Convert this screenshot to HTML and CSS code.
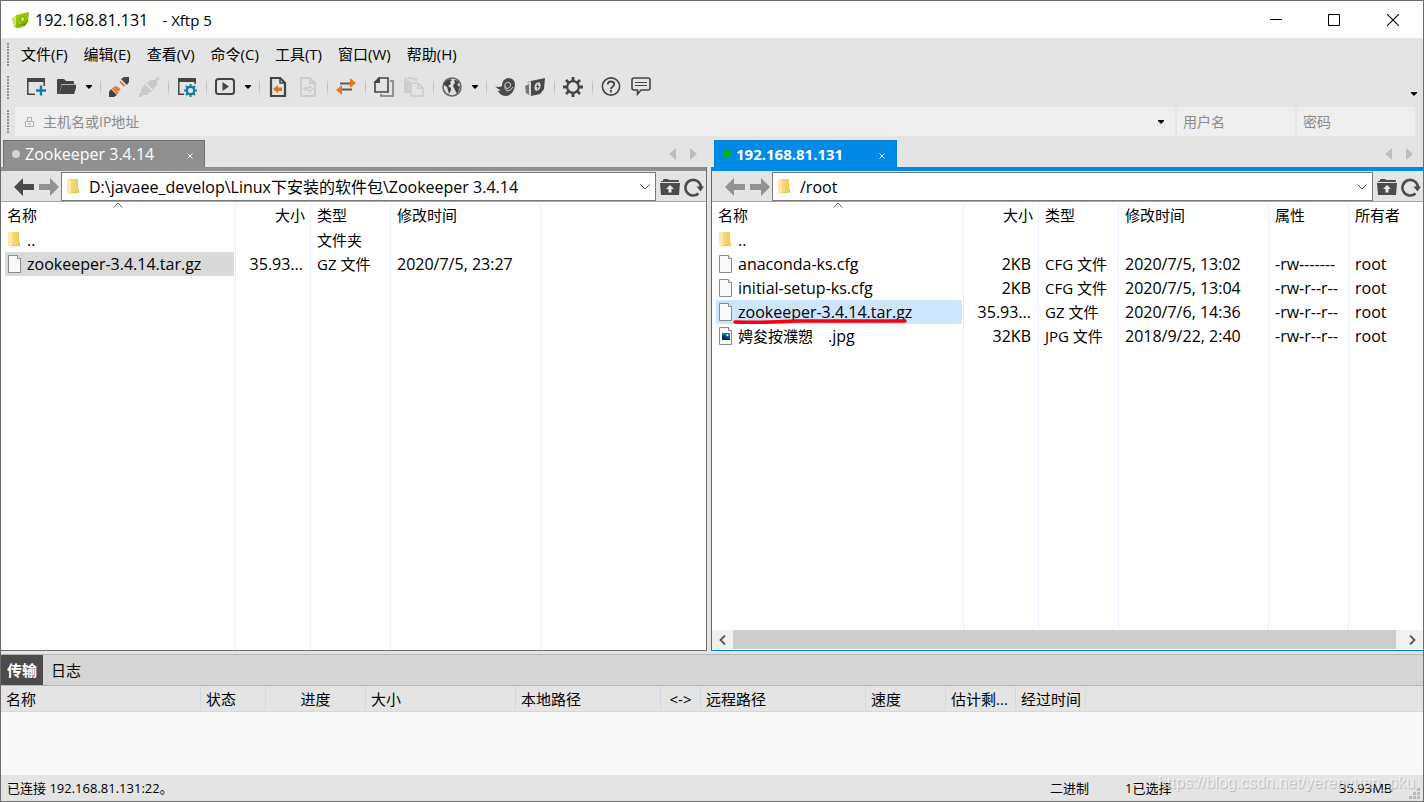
FILE: index.html
```html
<!DOCTYPE html>
<html lang="zh-CN">
<head>
<meta charset="utf-8">
<title>192.168.81.131 - Xftp 5</title>
<link rel="stylesheet" href="styles.css">
</head>
<body>
<svg class="defs" aria-hidden="true">
  <defs>
    <linearGradient id="gold" x1="0" x2="1"><stop offset="0" stop-color="#fbdf8d"/><stop offset="1" stop-color="#f2c85b"/></linearGradient>
    <linearGradient id="lime" x1="0" y1="0" x2="1" y2="1"><stop offset="0" stop-color="#b5d800"/><stop offset="1" stop-color="#5f9000"/></linearGradient>
  </defs>
  <symbol id="folder" viewBox="0 0 14 18"><path d="M3 1h9v13H3z" fill="url(#gold)"/><path d="M1 1h2l2 2v14l-4-2z" fill="#ffe9a8"/><path d="M12 11h1v4H5v-1h7z" fill="#eec45a"/></symbol>
  <symbol id="file" viewBox="0 0 16 20"><path d="M1.500 1.500h9l3 3v14h-12z" fill="#f7f9fa" stroke="#8a8a8a"/><path d="M10.500 1.500v3h3" fill="#fff" stroke="#8a8a8a"/></symbol>
  <symbol id="image" viewBox="0 0 16 20"><path d="M1.500 1.500h9l3 3v14h-12z" fill="#fff" stroke="#8a8a8a"/><path d="M10.500 1.500v3h3" fill="#fff" stroke="#8a8a8a"/><path d="M4 7h8v7H4z" fill="#1767c0"/><path d="M4 14v-3l2-2 3 3 1-1 2 2v1z" fill="#0a2d5f"/><circle cx="9.500" cy="9" r="1" fill="#fff"/></symbol>
  <symbol id="back" viewBox="0 0 20 18"><path d="M0 9 9 0v6h11v6H9v6z" fill="currentColor"/></symbol>
  <symbol id="forward" viewBox="0 0 20 18"><path d="M20 9 11 0v6H0v6h11v6z" fill="currentColor"/></symbol>
  <symbol id="up" viewBox="0 0 20 18"><path d="M1 4V3h2V2q0-1 1-1h4l1 1h9q1 0 1 1v1z" fill="#4b4b4b"/><path d="M0 5h20l-1 12H1z" fill="#4b4b4b"/><path d="M10 7l4 4h-2.500v3.500h-3V11H6z" fill="#e8e8e8"/></symbol>
  <symbol id="refresh" viewBox="0 0 20 20"><path d="M14.500 16.500A7.800 7.800 0 1 1 17 10" fill="none" stroke="#4b4b4b" stroke-width="2.600"/><path d="M12.500 9.500h7.500l-3.500 5z" fill="#4b4b4b"/></symbol>
  <symbol id="chevron" viewBox="0 0 10 6"><path d="M.5.500 5 5 9.500.500" fill="none" stroke="#444"/></symbol>
  <symbol id="sort" viewBox="0 0 10 6"><path d="M.5 5.500 5 1l4.500 4.500" fill="none" stroke="#666"/></symbol>
  <symbol id="caret" viewBox="0 0 8 4"><path d="M1 0h6v1L4 4 1 1z" fill="#000"/></symbol>
  <symbol id="prev" viewBox="0 0 7 12"><path d="M7 0v12L0 6z" fill="#bdbdbd"/></symbol>
  <symbol id="next" viewBox="0 0 7 12"><path d="M0 0v12l7-6z" fill="#bdbdbd"/></symbol>
  <symbol id="cross" viewBox="0 0 6 6"><path d="m.5.500 5 5m0-5-5 5" stroke="#fff" fill="none"/></symbol>
</svg>

<div class="window">
  <header class="titlebar">
    <svg class="logo" viewBox="0 0 19 18" aria-hidden="true"><path d="m1 7 3-1 1 8 9 2-8 1.500-3-2z" fill="#a9cc3a"/><path d="m2 6 4-2 1 11-4-1z" fill="#cbe67c"/><path d="m5 4 13-3-1 10-3 4-9 1z" fill="url(#lime)"/><path d="m6 5 11-3-1 8-9 4z" fill="#9ac60a"/><ellipse cx="11.500" cy="8" rx="2.200" ry="2.600" fill="#c9e45f" stroke="#7ba300"/></svg>
    <h1>192.168.81.131 <span>- Xftp 5</span></h1>
    <div class="winbuttons">
      <button aria-label="最小化"><svg width="12" height="12" viewBox="0 0 12 12"><path d="M0 5.500h12" stroke="#000"/></svg></button>
      <button aria-label="最大化"><svg width="12" height="12" viewBox="0 0 12 12"><path d="M.5.500h11v11H.5z" fill="none" stroke="#000"/></svg></button>
      <button aria-label="关闭"><svg width="12" height="12" viewBox="0 0 12 12"><path d="m0 0 12 12M12 0 0 12" stroke="#000" stroke-width="1.100"/></svg></button>
    </div>
  </header>

  <nav class="menubar gripped">
    <button>文件(F)</button><button>编辑(E)</button><button>查看(V)</button><button>命令(C)</button><button>工具(T)</button><button>窗口(W)</button><button>帮助(H)</button>
  </nav>

  <div class="toolbar gripped" role="toolbar">
    <button aria-label="新建"><svg viewBox="0 0 20 20"><path d="M1 1h18v4H1z" fill="#444"/><path d="M1.800 4v13.200H9M18.200 4v5" fill="none" stroke="#444" stroke-width="1.500"/><path d="M15 8.500v10M10 13.500h10" stroke="#1579a6" stroke-width="2.400"/></svg></button>
    <button aria-label="打开"><svg viewBox="0 0 20 20"><path d="M1 17V3q0-1 1-1h6l2 2h7q1 0 1 1v2H6L3 17z" fill="#444"/><path d="M6 8h15l-3 9H3z" fill="#444"/><path d="M5.500 7.500H20" stroke="#b5b5b5"/></svg></button>
    <button class="drop" aria-label="打开列表"><svg viewBox="0 0 8 4"><use href="#caret"/></svg></button>
    <i class="sep"></i>
    <button aria-label="连接"><svg viewBox="0 0 20 20"><path d="M0 20v-5l2-3 6 6-3 2zM20 0v5l-2 3-6-6 3-2z" fill="#444"/><path d="M3.500 11 9 16.500M5.500 9.500l4.500 4.500M11 4.500 15.500 9M6.500 12.500l2.500-2.500M8.500 14l2.500-2.500" stroke="#e27b1e" stroke-width="1.800"/></svg></button>
    <button disabled aria-label="断开"><svg viewBox="0 0 20 20"><path d="M0 20v-3l2-1v-4l4-4 6 6-4 4H4l-1 2zM8 6l6 6 4-4V4l2-1V0l-3 1-1 2h-4z" fill="#cacaca"/><path d="m5 7 8 8M7 5l8 8" stroke="#c4c4c4"/></svg></button>
    <i class="sep"></i>
    <button aria-label="属性"><svg viewBox="0 0 20 20"><path d="M1 1h18v4H1z" fill="#444"/><path d="M1.800 4v13.200H7M18.200 4v3" fill="none" stroke="#444" stroke-width="1.500"/><circle cx="13.500" cy="13.500" r="3.700" fill="#e5e5e5" stroke="#1579a6" stroke-width="2.200"/><path d="M13.500 7v3M13.500 17v3M7 13.500h3M17 13.500h3M9 9l2 2M16 16l2 2M9 18l2-2M16 11l2-2" stroke="#1579a6" stroke-width="2"/></svg></button>
    <i class="sep"></i>
    <button aria-label="运行"><svg viewBox="0 0 20 20"><rect x="1" y="2" width="18" height="15" rx="2.500" fill="none" stroke="#444" stroke-width="2"/><path d="m7.500 5 6.500 4.500L7.500 14z" fill="#444"/></svg></button>
    <button class="drop" aria-label="运行列表"><svg viewBox="0 0 8 4"><use href="#caret"/></svg></button>
    <i class="sep"></i>
    <button aria-label="传输"><svg viewBox="0 0 20 20"><path d="M3 1h9l5 5v13H3z" fill="none" stroke="#444" stroke-width="2.200"/><path d="M12 1v5h5" fill="none" stroke="#444" stroke-width="1.500"/><path d="m5 12 5-4v2.500h4v3.500h-4v2.500z" fill="#df761a"/></svg></button>
    <button disabled aria-label="接收"><svg viewBox="0 0 20 20"><path d="M3 1h9l5 5v13H3zM12 1v5h5" fill="none" stroke="#cbcbcb" stroke-width="1.800"/><path d="m15 12-4-3v2H6v2h5v2z" fill="none" stroke="#c2c2c2"/></svg></button>
    <i class="sep"></i>
    <button aria-label="同步"><svg viewBox="0 0 20 20"><path d="M14 1v10l6-5zM6 8v10l-6-5z" fill="#e17b20"/><path d="M4 6.500h10M6 12.500h10" stroke="#5b5b5b" stroke-width="2"/></svg></button>
    <i class="sep"></i>
    <button aria-label="复制"><svg viewBox="0 0 20 20"><path d="M5.500 1H14v14H1V5.500z" fill="none" stroke="#444" stroke-width="1.600"/><path d="M0 6V5l5-5h1v6z" fill="#444"/><path d="M16 4h3v15H7v-2" fill="none" stroke="#777" stroke-width="1.500"/></svg></button>
    <button disabled aria-label="粘贴"><svg viewBox="0 0 20 20"><path d="M0 1h4l1-1h3l1 1h4v3H6v12H0z" fill="#cdcdcd"/><path d="M2 3h9" stroke="#ececec"/><path d="M7 6h7l5 5v8H7zM14 6v5h5" fill="#e4e4e4" stroke="#cbcbcb" stroke-width="1.500"/></svg></button>
    <i class="sep"></i>
    <button aria-label="浏览"><svg viewBox="0 0 20 20"><circle cx="10" cy="10" r="9" fill="#dedede" stroke="#666" stroke-width="1.600"/><path d="M2 6q2-3 6-4l2 1-2 2 1 2-3 2 3 2v2l-2 4-1-4-1-3-3-2zM12 3q4 0 5 3l-2 2 2 1 1 1-1 3-2 4-2-4-2-4 1-2 1-1z" fill="#444"/></svg></button>
    <button class="drop" aria-label="浏览列表"><svg viewBox="0 0 8 4"><use href="#caret"/></svg></button>
    <i class="sep"></i>
    <button aria-label="Xshell"><svg viewBox="0 0 20 20"><path d="M0 9q4 2 7 0 0-7 6-8 7 0 7 7-1 9-8 11-7 0-9-5l3-1q-4-1-6-4z" fill="#4a4a4a"/><path d="M10 9q1 4 4 2 3-2 1-5-3-2-5 1-1 5 2 7 4 0 6-4" fill="none" stroke="#d0d0d0" stroke-width="1"/></svg></button>
    <button aria-label="Xftp"><svg viewBox="0 0 20 20"><path d="m6 4 14-3-1 11-4 5-9 2z" fill="#484848"/><path d="m0 9 4-2v11l-3-2z" fill="#777"/><path d="m2 5 5-2-2 3H2z" fill="#bbb"/><path d="M5 5v14" stroke="#cfcfcf"/><path d="M12.500 5.500q3-1 3 3t-3 5q-3 1-3-3t3-5z" fill="#dcdcdc"/><path d="m13 6.500-2 3.500h1.500l-.5 3 2.500-4H13z" fill="#484848"/></svg></button>
    <i class="sep"></i>
    <button aria-label="选项"><svg viewBox="0 0 20 20"><circle cx="10" cy="10" r="5.800" fill="none" stroke="#444" stroke-width="2.200"/><path d="M10 0v4M10 16v4M0 10h4M16 10h4M3 3l3 3M14 14l3 3M3 17l3-3M14 6l3-3" stroke="#444" stroke-width="2.800"/></svg></button>
    <i class="sep"></i>
    <button aria-label="帮助"><svg viewBox="0 0 20 20"><circle cx="10" cy="9.500" r="8.600" fill="none" stroke="#444" stroke-width="1.600"/><path d="M6.800 7.500q0-3 3.200-3t3.200 2.800q0 1.500-1.600 2.500T10 12M10 13v2.500" fill="none" stroke="#444" stroke-width="1.800"/></svg></button>
    <button aria-label="反馈"><svg viewBox="0 0 20 20"><path d="M3 1h14q2 0 2 2v8q0 2-2 2h-7l-3.500 4v-4H3q-2 0-2-2V3q0-2 2-2z" fill="none" stroke="#444" stroke-width="1.600"/><path d="M4 5.500h12M4 8.500h12" stroke="#444" stroke-width="1.200"/></svg></button>
    <button class="overflow" aria-label="更多"><svg viewBox="0 0 8 4"><use href="#caret"/></svg></button>
  </div>

  <form class="address gripped">
    <div class="host">
      <svg class="lock" viewBox="0 0 9 10" aria-hidden="true"><path d="M.5 4.500h8v5h-8zM2.500 4V.500h4V4M3 7h3" fill="none" stroke="#b0b0b0"/></svg>
      <input aria-label="主机名或IP地址" placeholder="主机名或IP地址">
      <button type="button" class="drop" aria-label="主机列表"><svg viewBox="0 0 8 4"><use href="#caret"/></svg></button>
    </div>
    <input class="cred" aria-label="用户名" placeholder="用户名">
    <input class="cred" type="password" aria-label="密码" placeholder="密码">
  </form>

  <main class="panes">
    <section class="pane local">
      <div class="tabs">
        <div class="tab"><i class="dot"></i><span>Zookeeper 3.4.14</span><button aria-label="关闭标签"><svg viewBox="0 0 6 6"><use href="#cross"/></svg></button></div>
        <div class="scrolltabs"><button aria-label="上一个"><svg viewBox="0 0 7 12"><use href="#prev"/></svg></button><button aria-label="下一个"><svg viewBox="0 0 7 12"><use href="#next"/></svg></button></div>
      </div>
      <div class="frame">
        <div class="pathbar">
          <button class="nav on" aria-label="后退"><svg viewBox="0 0 20 18"><use href="#back"/></svg></button>
          <button class="nav" aria-label="前进"><svg viewBox="0 0 20 18"><use href="#forward"/></svg></button>
          <div class="path"><svg class="folder"><use href="#folder"/></svg><input aria-label="本地路径" value="D:\javaee_develop\Linux下安装的软件包\Zookeeper 3.4.14"><button aria-label="展开"><svg viewBox="0 0 10 6"><use href="#chevron"/></svg></button></div>
          <button class="tool" aria-label="上级文件夹"><svg viewBox="0 0 20 18"><use href="#up"/></svg></button>
          <button class="tool" aria-label="刷新"><svg viewBox="0 0 20 20"><use href="#refresh"/></svg></button>
        </div>
        <div class="list">
          <table>
            <colgroup><col class="c-lname"><col class="c-size"><col class="c-type"><col class="c-date"><col></colgroup>
            <thead><tr><th>名称<svg class="sort" viewBox="0 0 10 6"><use href="#sort"/></svg></th><th class="num">大小</th><th>类型</th><th>修改时间</th><th></th></tr></thead>
            <tbody>
              <tr><td><div class="name"><svg class="folder"><use href="#folder"/></svg>..</div></td><td></td><td class="kind">文件夹</td><td></td><td></td></tr>
              <tr><td><div class="name idle"><svg class="file"><use href="#file"/></svg>zookeeper-3.4.14.tar.gz</div></td><td class="num">35.93...</td><td class="kind">GZ 文件</td><td>2020/7/5, 23:27</td><td></td></tr>
              <tr class="rest"><td></td><td></td><td></td><td></td><td></td></tr>
            </tbody>
          </table>
        </div>
      </div>
    </section>

    <section class="pane remote">
      <div class="tabs">
        <div class="tab"><i class="dot"></i><span>192.168.81.131</span><button aria-label="关闭标签"><svg viewBox="0 0 6 6"><use href="#cross"/></svg></button></div>
        <div class="scrolltabs"><button aria-label="上一个"><svg viewBox="0 0 7 12"><use href="#prev"/></svg></button><button aria-label="下一个"><svg viewBox="0 0 7 12"><use href="#next"/></svg></button></div>
      </div>
      <div class="frame">
        <div class="pathbar">
          <button class="nav" aria-label="后退"><svg viewBox="0 0 20 18"><use href="#back"/></svg></button>
          <button class="nav" aria-label="前进"><svg viewBox="0 0 20 18"><use href="#forward"/></svg></button>
          <div class="path"><svg class="folder"><use href="#folder"/></svg><input aria-label="远程路径" value="/root"><button aria-label="展开"><svg viewBox="0 0 10 6"><use href="#chevron"/></svg></button></div>
          <button class="tool" aria-label="上级文件夹"><svg viewBox="0 0 20 18"><use href="#up"/></svg></button>
          <button class="tool" aria-label="刷新"><svg viewBox="0 0 20 20"><use href="#refresh"/></svg></button>
        </div>
        <div class="list">
          <table>
            <colgroup><col class="c-rname"><col class="c-size"><col class="c-type"><col class="c-date"><col class="c-type"><col></colgroup>
            <thead><tr><th>名称<svg class="sort" viewBox="0 0 10 6"><use href="#sort"/></svg></th><th class="num">大小</th><th>类型</th><th>修改时间</th><th>属性</th><th>所有者</th></tr></thead>
            <tbody>
              <tr><td><div class="name"><svg class="folder"><use href="#folder"/></svg>..</div></td><td></td><td></td><td></td><td></td><td></td></tr>
              <tr><td><div class="name"><svg class="file"><use href="#file"/></svg>anaconda-ks.cfg</div></td><td class="num">2KB</td><td class="kind">CFG 文件</td><td>2020/7/5, 13:02</td><td>-rw-------</td><td>root</td></tr>
              <tr><td><div class="name"><svg class="file"><use href="#file"/></svg>initial-setup-ks.cfg</div></td><td class="num">2KB</td><td class="kind">CFG 文件</td><td>2020/7/5, 13:04</td><td>-rw-r--r--</td><td>root</td></tr>
              <tr><td><div class="name picked"><svg class="file"><use href="#file"/></svg>zookeeper-3.4.14.tar.gz<svg class="mark" viewBox="0 0 176 6" aria-hidden="true"><path d="M2 4q30 1 60-1h110" fill="none" stroke="#f80010" stroke-width="3.500" stroke-linecap="round"/></svg></div></td><td class="num">35.93...</td><td class="kind">GZ 文件</td><td>2020/7/6, 14:36</td><td>-rw-r--r--</td><td>root</td></tr>
              <tr><td><div class="name"><svg class="file"><use href="#image"/></svg><span class="kind">娉夋按濮愬</span><span class="ext">.jpg</span></div></td><td class="num">32KB</td><td class="kind">JPG 文件</td><td>2018/9/22, 2:40</td><td>-rw-r--r--</td><td>root</td></tr>
              <tr class="rest"><td></td><td></td><td></td><td></td><td></td><td></td></tr>
            </tbody>
          </table>
        </div>
        <div class="hscroll">
          <button aria-label="向左滚动"><svg viewBox="0 0 7 10"><path d="M6 .500 1.500 5 6 9.500" fill="none" stroke="#555" stroke-width="1.800"/></svg></button>
          <div class="thumb"></div>
          <button aria-label="向右滚动"><svg viewBox="0 0 7 10"><path d="M1 .500 5.500 5 1 9.500" fill="none" stroke="#555" stroke-width="1.800"/></svg></button>
        </div>
      </div>
    </section>
  </main>

  <section class="transfers">
    <div class="bottomtabs"><button class="active">传输</button><button>日志</button></div>
    <table>
      <colgroup><col class="t200"><col class="t65"><col class="t100"><col class="t150"><col class="t145"><col class="t40"><col class="t165"><col class="t80"><col class="t70"><col class="t70"><col></colgroup>
      <thead><tr><th>名称</th><th>状态</th><th class="mid">进度</th><th>大小</th><th>本地路径</th><th class="mid">&lt;-&gt;</th><th>远程路径</th><th>速度</th><th>估计剩...</th><th>经过时间</th><th></th></tr></thead>
    </table>
  </section>

  <footer class="status">
    <span class="conn">已连接 192.168.81.131:22。</span><span class="mode">二进制</span><span class="count">1已选择</span><span class="total">35.93MB</span>
    <svg class="grip" viewBox="0 0 11 11" aria-hidden="true"><path d="M8 0h3v3H8zM4 4h3v3H4zM8 4h3v3H8zM0 8h3v3H0zM4 8h3v3H4zM8 8h3v3H8z" fill="#b9b9b9"/></svg>
    <span class="watermark">https://blog.csdn.net/yerenyuan_pku</span>
  </footer>
</div>
</body>
</html>
```
FILE: styles.css
```css
* { box-sizing: border-box; }
body { margin: 0; font: 15px/20px "Open Sans", "Noto Sans CJK SC", sans-serif; color: #000; }
button, input { font: inherit; color: inherit; border: 0; padding: 0; margin: 0; background: none; outline: 0; border-radius: 0; }
button { display: flex; align-items: center; justify-content: center; flex: none; }
svg { display: block; flex: none; }
.defs { position: absolute; width: 0; height: 0; }

.window { display: flex; flex-direction: column; height: 100vh; border: 1px solid #6b6b6b; background: #e4e4e4; overflow: hidden; }

.titlebar { display: flex; align-items: center; flex: none; height: 37px; background: #fff; padding-left: 10px; }
.logo { width: 19px; height: 18px; margin-right: 5px; }
h1 { margin: 0; font-size: 16px; font-weight: 400; flex: 1; }
h1 span { margin-left: 10px; font-size: 15px; }
.winbuttons { display: flex; }
.winbuttons button { width: 58px; height: 37px; }
.winbuttons button:last-child { width: 60px; }

.gripped { display: flex; flex: none; background: repeating-linear-gradient(#8f8f8f 0 2px, transparent 2px 3px) 6px center / 2px 23px no-repeat; }
.menubar { height: 32px; padding-left: 13px; }
.menubar button { padding: 0 7px; margin-right: 2px; }

.toolbar { height: 34px; padding-left: 20px; align-items: center; }
.toolbar button { width: 30px; height: 30px; }
.toolbar button svg { width: 20px; height: 20px; }
.toolbar .drop { width: 15px; }
.toolbar .drop svg, .toolbar .overflow svg, .host .drop svg { width: 8px; height: 4px; }
.sep { width: 8px; height: 18px; background: linear-gradient(transparent, #b5b5b5, transparent) center / 1px 100% no-repeat; }
.toolbar .overflow { margin-left: auto; width: 18px; height: 34px; align-items: flex-end; padding-bottom: 8px; }

.address { height: 34px; padding: 3px 8px 2px 14px; gap: 2px; color: #8a8a8a; font-size: 14px; }
.host { flex: 1; display: flex; align-items: center; background: #eee; }
.host input { flex: 1; margin-left: 9px; }
.lock { width: 9px; height: 10px; margin-left: 10px; }
.host .drop { width: 28px; }
.cred { width: 118px; background: #eee; padding: 0 6px; }
::placeholder { color: #8a8a8a; opacity: 1; }

.panes { flex: 1; min-height: 0; display: grid; grid-template-columns: 706fr 712fr; gap: 4px; }
.pane { --edge: #707070; --bar: #8f8f8f; display: flex; flex-direction: column; min-width: 0; min-height: 0; }
.pane.remote { --edge: #0082d9; --bar: #008ae6; }
.tabs { display: flex; flex: none; height: 29px; padding: 2px 10px 0 2px; justify-content: space-between; }
.tab { display: flex; align-items: center; width: 202px; padding: 0 8px; background: var(--bar); border: 1px solid var(--edge); border-bottom: 0; color: #fff; font-size: 16px; }
.tab span { flex: 1; margin-left: 5px; }
.tab button { width: 12px; height: 12px; margin-top: 4px; }
.tab button svg { width: 6px; height: 6px; }
.dot { width: 8px; height: 8px; border-radius: 50%; background: #d4d4d4; }
.remote .tabs { padding-left: 3px; }
.remote .tab { width: 183px; font-size: 15px; font-weight: 700; }
.remote .dot { background: #0cb50c; }
.scrolltabs { display: flex; gap: 14px; align-items: center; }
.scrolltabs svg { width: 7px; height: 12px; }

.frame { flex: 1; min-height: 0; display: flex; flex-direction: column; border-right: 1px solid var(--edge); border-bottom: 1px solid var(--edge); background: #fff; }
.remote .frame { border-left: 1px solid var(--edge); border-right: 0; }
.pathbar { display: flex; flex: none; align-items: center; height: 35px; padding: 1px 2px 0 13px; background: #e4e4e4; border-top: 4px solid var(--bar); border-bottom: 1px solid #a5a5a5; }
.nav { width: 20px; color: #929292; margin-right: 5px; }
.nav + .nav { margin-right: 2px; }
.nav.on { color: #4b4b4b; }
.nav svg { width: 20px; height: 18px; }
.path { flex: 1; display: flex; align-items: center; min-width: 0; height: 29px; border: 1px solid #7a7a7a; background: #fff; padding-left: 4px; }
.path input { flex: 1; min-width: 0; margin-left: 9px; font-size: 16px; }
.path button { width: 20px; height: 27px; }
.path button svg { width: 10px; height: 6px; }
.tool { margin-left: 4px; width: 20px; }
.tool svg { width: 20px; height: 18px; }
.tool + .tool svg { height: 20px; }
.folder { width: 14px; height: 18px; }

.list { flex: 1; min-height: 0; }
table { width: 100%; border-collapse: separate; border-spacing: 0; table-layout: fixed; }
.list table { height: 100%; font-size: 16px; }
th, td { padding: 0 0 0 6px; text-align: left; font-weight: 400; white-space: nowrap; border-right: 1px solid #e6eefa; overflow: hidden; }
th:last-child, td:last-child { border-right: 0; }
.list th { position: relative; height: 26px; font-size: 15px; }
.list td { height: 24px; }
.list .rest td { height: auto; }
.list td:first-child { padding: 0 1px 0 4px; }
.list .num { text-align: right; padding: 0 7px 0 0; }
.list th.num { padding-right: 5px; }
.kind { font-size: 15px; }
.sort { position: absolute; top: 0; left: 50%; width: 10px; height: 6px; margin-left: -5px; }
.name { position: relative; display: flex; align-items: center; height: 24px; padding-left: 2px; }
.name .folder { margin-right: 6px; }
.file { width: 16px; height: 20px; margin-right: 4px; }
.idle { background: #d9d9d9; }
.picked { background: #cce6ff; }
.mark { position: absolute; left: 17px; bottom: 0; width: 176px; height: 6px; }
.ext { margin-left: 15px; }
.c-lname { width: 235px; }
.c-rname { width: 252px; }
.c-size { width: 75px; }
.c-type { width: 80px; }
.c-date { width: 150px; }

.hscroll { display: flex; flex: none; height: 20px; background: #f0f0f0; border-bottom: 1px solid #fff; }
.hscroll button { width: 21px; }
.hscroll button:last-child { width: 27px; padding-left: 6px; }
.hscroll svg { width: 7px; height: 10px; }
.thumb { flex: 1; background: #cdcdcd; }

.transfers { flex: none; height: 121px; margin-top: 3px; background: #f8f8f8; }
.bottomtabs { display: flex; height: 32px; background: #d6d6d6; border-top: 1px solid #b5b5b5; border-bottom: 1px solid #b5b5b5; }
.bottomtabs button { width: 42px; }
.bottomtabs .active { background: #4b4b4b; color: #fff; font-weight: 700; }
.bottomtabs button + button { width: 46px; }
.transfers th { height: 26px; padding-left: 5px; background: #e4e4e4; border-right-color: #cfd8e3; border-bottom: 1px solid #cfd8e3; }
.transfers .mid { text-align: center; padding: 0; }
.t200 { width: 200px; } .t65 { width: 65px; } .t100 { width: 100px; } .t150 { width: 150px; } .t145 { width: 145px; }
.t40 { width: 40px; } .t165 { width: 165px; } .t80 { width: 80px; } .t70 { width: 70px; }

.status { position: relative; display: flex; flex: none; align-items: center; height: 26px; padding-left: 6px; font-size: 13px; }
.conn { flex: 1; }
.mode { width: 75px; }
.count { width: 214px; }
.total { width: 70px; }
.grip { width: 11px; height: 11px; margin: 10px 3px 0 0; }
.watermark { position: absolute; right: 8px; top: -2px; font: 16px/20px "Liberation Sans", Arial, sans-serif; color: rgba(255, 255, 255, 0.65); text-shadow: 1px 1px 1px rgba(0, 0, 0, 0.2); }
```
